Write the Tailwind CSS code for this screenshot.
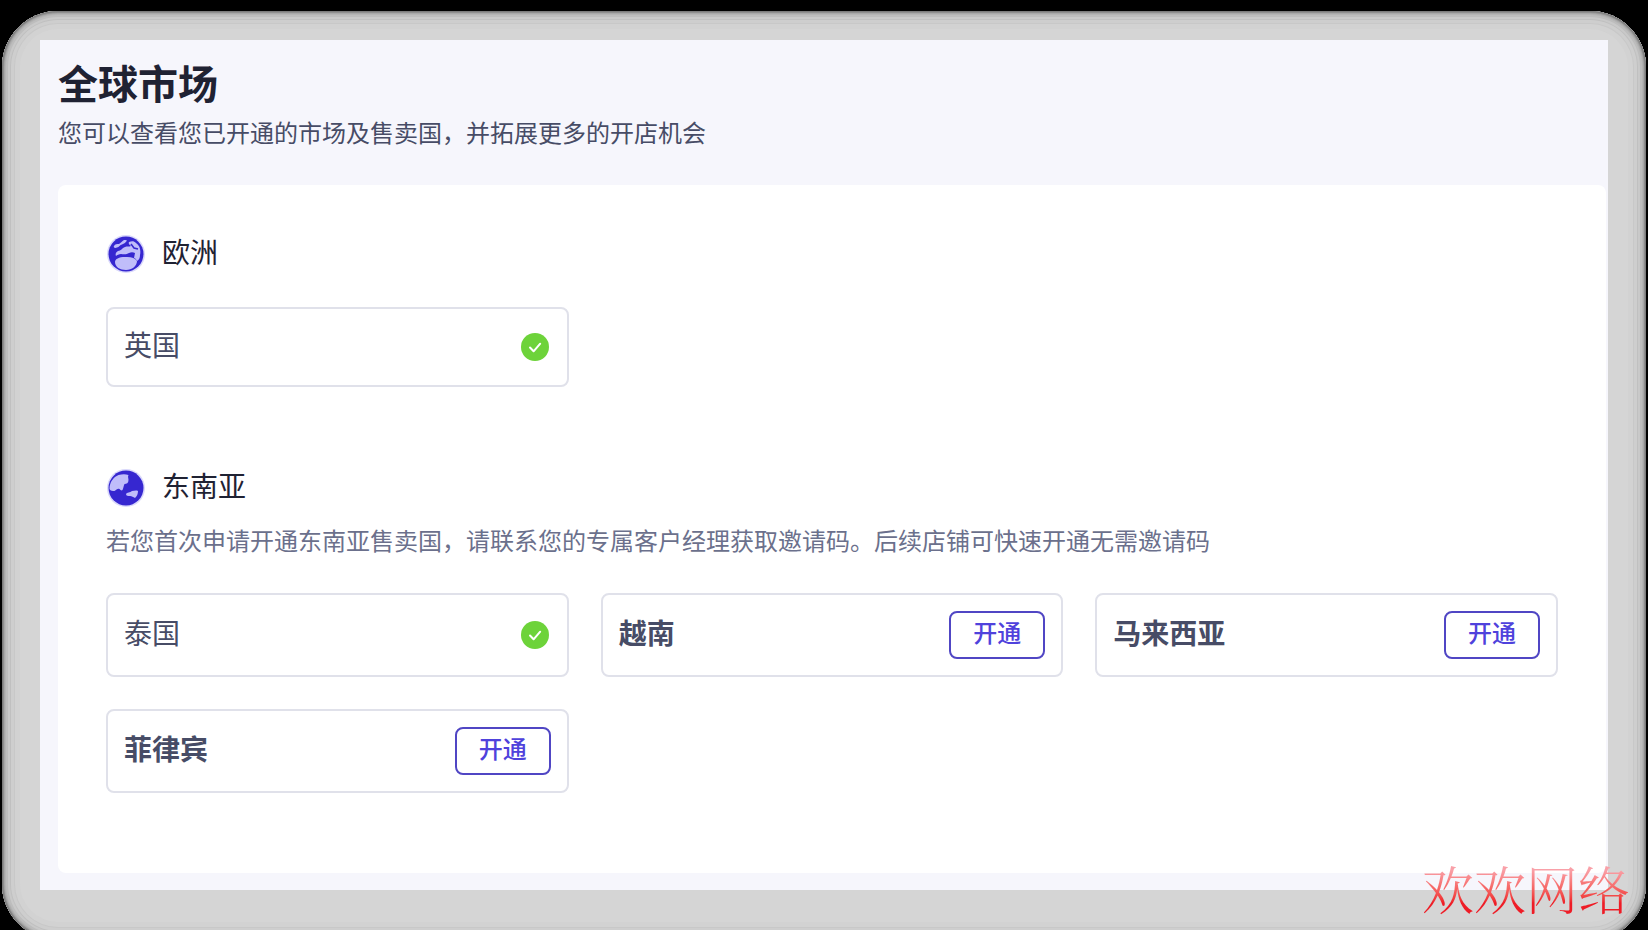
<!DOCTYPE html>
<html lang="zh-CN">
<head>
<meta charset="utf-8">
<meta name="viewport" content="width=device-width, initial-scale=1">
<title>全球市场</title>
<script src="https://cdn.jsdelivr.net/npm/@tailwindcss/browser@4"></script>
</head>
<body class="bg-black font-['Noto_Sans_CJK_SC',sans-serif]">
<div class="h-screen overflow-hidden px-[2px] pt-[11px]">
  <div class="relative rounded-[56px] bg-[#d5d5d5] px-[38px] pt-[29px] pb-[50px] shadow-[inset_0_0_0_1px_#7c7c7c,inset_0_0_0_2px_#8f8f8f,inset_0_0_0_3px_#a8a8a8,inset_0_0_0_4px_#b4b4b4,inset_0_0_0_6px_#bdbdbd,inset_0_0_0_8px_#c9c9c9,inset_0_0_0_9px_#c0c0c0,inset_0_0_0_12px_#cecece,inset_0_0_0_13px_#c8c8c8,inset_0_0_0_18px_#d2d2d2]">
    <main class="bg-[#f6f6fc] pt-[14px] pr-[2px] pb-[17px] pl-[18px]">
      <header class="mb-[35px]">
        <h1 class="text-[40px] leading-[56px] font-bold text-[#1f2233]">全球市场</h1>
        <p class="pt-1 text-2xl leading-9 text-[#474c66]">您可以查看您已开通的市场及售卖国，并拓展更多的开店机会</p>
      </header>
      <div class="rounded-lg bg-white px-12 pt-12 pb-20">
        <section class="mb-20">
          <h2 class="mb-8 flex h-[42px] items-center gap-4 text-[28px] leading-10 text-[#1f2233]">
            <svg class="size-10" viewBox="0 0 40 40" aria-hidden="true">
              <circle cx="20" cy="20" r="19" fill="#d9d8fb"/>
              <circle cx="20" cy="20" r="17.5" fill="#3627d0"/>
              <path d="M9 28c0-3 4-5 10-5 6-.5 10 1 12 4 0 5-5 9-11 9S9 33 9 28z" fill="#c0bdfa"/>
              <path d="M23 8c3-1 5-1 7 1 4 3 5 7 4 12 0 3-1 5-3 6-1-2-2-3-3-3l1-5c-2-1-4-1-6 0-3 2-6 1-8 1-2 0-4 1-5 2-1-2 0-4 2-5 3 0 4-3 7-4 2-1 4 0 6-1-1-1-3-2-2-4z" fill="#c0bdfa"/>
              <path d="M8 12c1-2 3-2 5-2 2-1 3-3 5-4 1 0 2 0 3 .5-1 2-3 3-5 4-2 0-3 3-5 3-2 1-4 0-3-1.500z" fill="#c0bdfa"/>
              <path d="M25 10l3 4 4 1" fill="none" stroke="#3627d0" stroke-width="1.500"/>
            </svg>
            <span class="pb-1.5">欧洲</span>
          </h2>
          <ul class="grid grid-cols-3 gap-8 text-[28px] text-[#474c66]">
            <li class="flex h-20 items-center justify-between rounded-lg border-2 border-[#e0e1ea] px-4">
              <span class="pb-1.5 leading-10">英国</span>
              <svg class="mr-0.5 size-7" viewBox="0 0 28 28" role="img" aria-label="已开通"><circle cx="14" cy="14" r="14" fill="#6dd33a"/><path d="M9 14.5l3.600 3.800 6.600-7.600" fill="none" stroke="#fff" stroke-width="2" stroke-linecap="round" stroke-linejoin="round"/></svg>
            </li>
          </ul>
        </section>
        <section>
          <h2 class="flex h-[42px] items-center gap-4 text-[28px] leading-10 text-[#1f2233]">
            <svg class="size-10" viewBox="0 0 40 40" aria-hidden="true">
              <circle cx="20" cy="20" r="19" fill="#d9d8fb"/>
              <circle cx="20" cy="20" r="17.5" fill="#3627d0"/>
              <path d="M3.500 21c0-7 4-12 9-14 4-1 7-1 10 0-1 2 0 3 0 5 0 3-2 4-4 4-1 2-1 4-2 6-1 1-2 0-3-1-2-1-3 1-5 2-2 0-4 0-5-2z" fill="#c0bdfa"/>
              <path d="M20 26c1-2 4-1 6-3 2 0 4-1 6 0 0 3-1 5-3 7-2-1-3-2-5-2-2 0-4 0-4-2z" fill="#c0bdfa"/>
            </svg>
            <span class="pb-1.5">东南亚</span>
          </h2>
          <p class="mt-[13px] mb-[35px] text-2xl leading-9 text-[#6b708c]">若您首次申请开通东南亚售卖国，请联系您的专属客户经理获取邀请码。后续店铺可快速开通无需邀请码</p>
          <ul class="grid grid-cols-3 gap-8 text-[28px] text-[#474c66]">
            <li class="flex h-21 items-center justify-between rounded-lg border-2 border-[#e0e1ea] px-4">
              <span class="pb-1.5 leading-10">泰国</span>
              <svg class="mr-0.5 size-7" viewBox="0 0 28 28" role="img" aria-label="已开通"><circle cx="14" cy="14" r="14" fill="#6dd33a"/><path d="M9 14.5l3.600 3.800 6.600-7.600" fill="none" stroke="#fff" stroke-width="2" stroke-linecap="round" stroke-linejoin="round"/></svg>
            </li>
            <li class="flex h-21 items-center justify-between rounded-lg border-2 border-[#e0e1ea] px-4">
              <span class="pb-1.5 leading-10 font-bold">越南</span>
              <button type="button" class="h-12 w-24 rounded-lg border-2 border-[#5046c4] pb-1.5 text-2xl leading-9 font-medium text-[#4f42dc]">开通</button>
            </li>
            <li class="flex h-21 items-center justify-between rounded-lg border-2 border-[#e0e1ea] px-4">
              <span class="pb-1.5 leading-10 font-bold">马来西亚</span>
              <button type="button" class="h-12 w-24 rounded-lg border-2 border-[#5046c4] pb-1.5 text-2xl leading-9 font-medium text-[#4f42dc]">开通</button>
            </li>
            <li class="flex h-21 items-center justify-between rounded-lg border-2 border-[#e0e1ea] px-4">
              <span class="pb-1.5 leading-10 font-bold">菲律宾</span>
              <button type="button" class="h-12 w-24 rounded-lg border-2 border-[#5046c4] pb-1.5 text-2xl leading-9 font-medium text-[#4f42dc]">开通</button>
            </li>
          </ul>
        </section>
      </div>
    </main>
    <div class="absolute right-4 bottom-[22px] bg-linear-to-b from-[#f9a0a8] from-20% to-[#ee1c26] to-75% bg-clip-text font-['Noto_Serif_CJK_SC','Noto_Sans_CJK_SC',serif] text-[52px] leading-[60px] font-light text-transparent">欢欢网络</div>
  </div>
</div>
</body>
</html>
